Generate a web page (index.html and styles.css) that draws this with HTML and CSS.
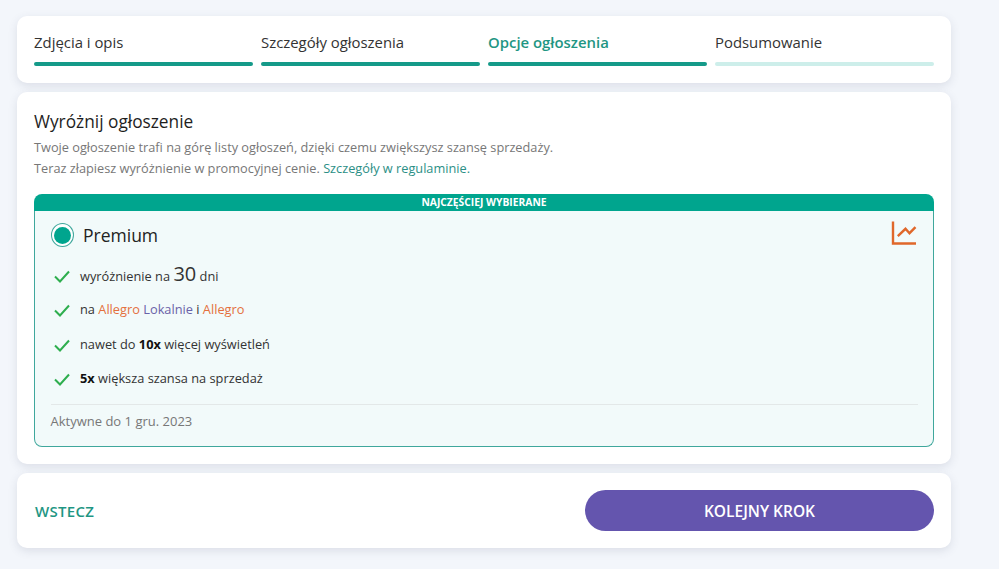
FILE: index.html
```html
<!DOCTYPE html>
<html lang="pl">
<head>
<meta charset="utf-8">
<title>Opcje ogłoszenia</title>
<link rel="stylesheet" href="styles.css">
</head>
<body>
<main class="page">
  <section class="card steps">
    <div class="step"><span class="step-label">Zdjęcia i opis</span><span class="bar"></span></div>
    <div class="step"><span class="step-label">Szczegóły ogłoszenia</span><span class="bar"></span></div>
    <div class="step current"><span class="step-label">Opcje ogłoszenia</span><span class="bar"></span></div>
    <div class="step todo"><span class="step-label">Podsumowanie</span><span class="bar"></span></div>
  </section>
  <section class="card promo">
    <h1 class="title">Wyróżnij ogłoszenie</h1>
    <p class="desc">Twoje ogłoszenie trafi na górę listy ogłoszeń, dzięki czemu zwiększysz szansę sprzedaży.<br>Teraz złapiesz wyróżnienie w promocyjnej cenie. <a class="link" href="#">Szczegóły w regulaminie.</a></p>
    <div class="option">
      <div class="ribbon">NAJCZĘŚCIEJ WYBIERANE</div>
      <div class="option-body">
        <div class="option-head">
          <span class="radio"><span class="radio-dot"></span></span>
          <span class="option-name">Premium</span>
          <svg class="chart" width="26" height="26" viewBox="0 0 26 26" fill="none" stroke="#e0672a" stroke-width="2.4"><path d="M2 1.500V23.500H25"/><path d="M6.800 16.200L14.500 8.800L18.500 13.200L24.500 7.200"/></svg>
        </div>
        <ul class="features">
          <li class="feature"><svg class="check" width="16" height="13" viewBox="0 0 16 13" fill="none" stroke="#2eae4e" stroke-width="2"><path d="M1 6.500L6 11.500L15 1.500"/></svg><span>wyróżnienie na <span class="big">30</span> dni</span></li>
          <li class="feature"><svg class="check" width="16" height="13" viewBox="0 0 16 13" fill="none" stroke="#2eae4e" stroke-width="2"><path d="M1 6.500L6 11.500L15 1.500"/></svg><span>na <span class="orange">Allegro</span> <span class="violet">Lokalnie</span> i <span class="orange">Allegro</span></span></li>
          <li class="feature"><svg class="check" width="16" height="13" viewBox="0 0 16 13" fill="none" stroke="#2eae4e" stroke-width="2"><path d="M1 6.500L6 11.500L15 1.500"/></svg><span>nawet do <b>10x</b> więcej wyświetleń</span></li>
          <li class="feature"><svg class="check" width="16" height="13" viewBox="0 0 16 13" fill="none" stroke="#2eae4e" stroke-width="2"><path d="M1 6.500L6 11.500L15 1.500"/></svg><span><b>5x</b> większa szansa na sprzedaż</span></li>
        </ul>
        <div class="active-until">Aktywne do 1 gru. 2023</div>
      </div>
    </div>
  </section>
  <section class="card actions">
    <a class="back" href="#">WSTECZ</a>
    <button class="next" type="button">KOLEJNY KROK</button>
  </section>
</main>
</body>
</html>
```
FILE: styles.css
```css
* { box-sizing: border-box; }
html, body { margin: 0; padding: 0; }
body {
  background: #f3f6fb;
  font-family: "Open Sans", "Noto Sans", sans-serif;
  color: #2b2b2b;
  height: 569px;
  overflow: hidden;
}
.page {
  width: 934px;
  margin-left: 17px;
  padding-top: 16px;
  display: flex;
  flex-direction: column;
  gap: 9px;
}
.card {
  background: #fff;
  border-radius: 10px;
  box-shadow: 0 3px 10px rgba(60, 70, 100, 0.13);
  padding: 0 17px;
}
.steps {
  height: 67px;
  display: grid;
  grid-template-columns: repeat(4, 1fr);
  gap: 8px;
  padding-top: 17px;
}
.step { display: flex; flex-direction: column; }
.step-label { font-size: 14.9px; line-height: 21px; color: #333; margin-top: -1px; margin-bottom: 1px; }
.bar { height: 4px; margin-top: 8px; border-radius: 2px; background: #159a89; }
.current .step-label { color: #1f9683; font-weight: 600; }
.todo .bar { background: #cdeeea; }
.promo { height: 372px; padding-top: 18px; }
.title { margin: 0; font-size: 17.300px; line-height: 24px; font-weight: 500; color: #1e1e1e; }
.desc { margin: 3px 0 0; font-size: 12.750px; line-height: 21px; color: #777; }
.link { color: #2b8f86; text-decoration: none; }
.option { margin-top: 15px; height: 253px; display: flex; flex-direction: column; }
.ribbon {
  height: 17px;
  background: #00a58e;
  border-radius: 8px 8px 0 0;
  color: #fff;
  font-size: 10.300px;
  line-height: 16px;
  font-weight: 700;
  text-align: center;
}
.option-body {
  flex: 1;
  background: #f2fafa;
  border: solid #3fa79c;
  border-width: 0 1.500px 1.500px;
  border-radius: 0 0 8px 8px;
  padding: 12px 15px 0 15.500px;
}
.option-head { display: flex; align-items: center; gap: 9.500px; height: 24px; }
.radio {
  width: 23px;
  height: 24px;
  border-radius: 50%;
  border: 1px solid #3fa79c;
  background: #fff;
  display: flex;
  align-items: center;
  justify-content: center;
}
.radio-dot { width: 17px; height: 17px; border-radius: 50%; background: #00a58e; }
.option-name { font-size: 17.500px; font-weight: 500; color: #222; }
.chart { margin-left: auto; margin-right: 1px; margin-top: -5px; }
.features { list-style: none; margin: 10.500px 0 0; padding: 0 0 0 3.500px; }
.feature { display: flex; align-items: center; gap: 10px; height: 34.500px; font-size: 12.800px; color: #333; }
.check { flex: none; margin-top: 3px; }
.big { font-size: 20px; line-height: 20px; }
.orange { color: #e4703d; }
.violet { color: #6a62a8; }
b { font-weight: 700; color: #111; }
.active-until {
  margin-top: 8.500px;
  border-top: 1px solid #e3e8e8;
  padding-top: 6px;
  font-size: 13px;
  line-height: 20px;
  color: #777;
}
.actions {
  height: 75px;
  display: flex;
  align-items: center;
  justify-content: space-between;
}
.back { font-size: 15px; font-weight: 600; color: #1f9683; text-decoration: none; letter-spacing: 0.3px; margin-left: 1px; }
.next {
  width: 349px;
  height: 41px;
  border: 0;
  border-radius: 21px;
  background: #6455ae;
  color: #fff;
  font-family: inherit;
  font-size: 15.500px;
  font-weight: 600;
}
```
